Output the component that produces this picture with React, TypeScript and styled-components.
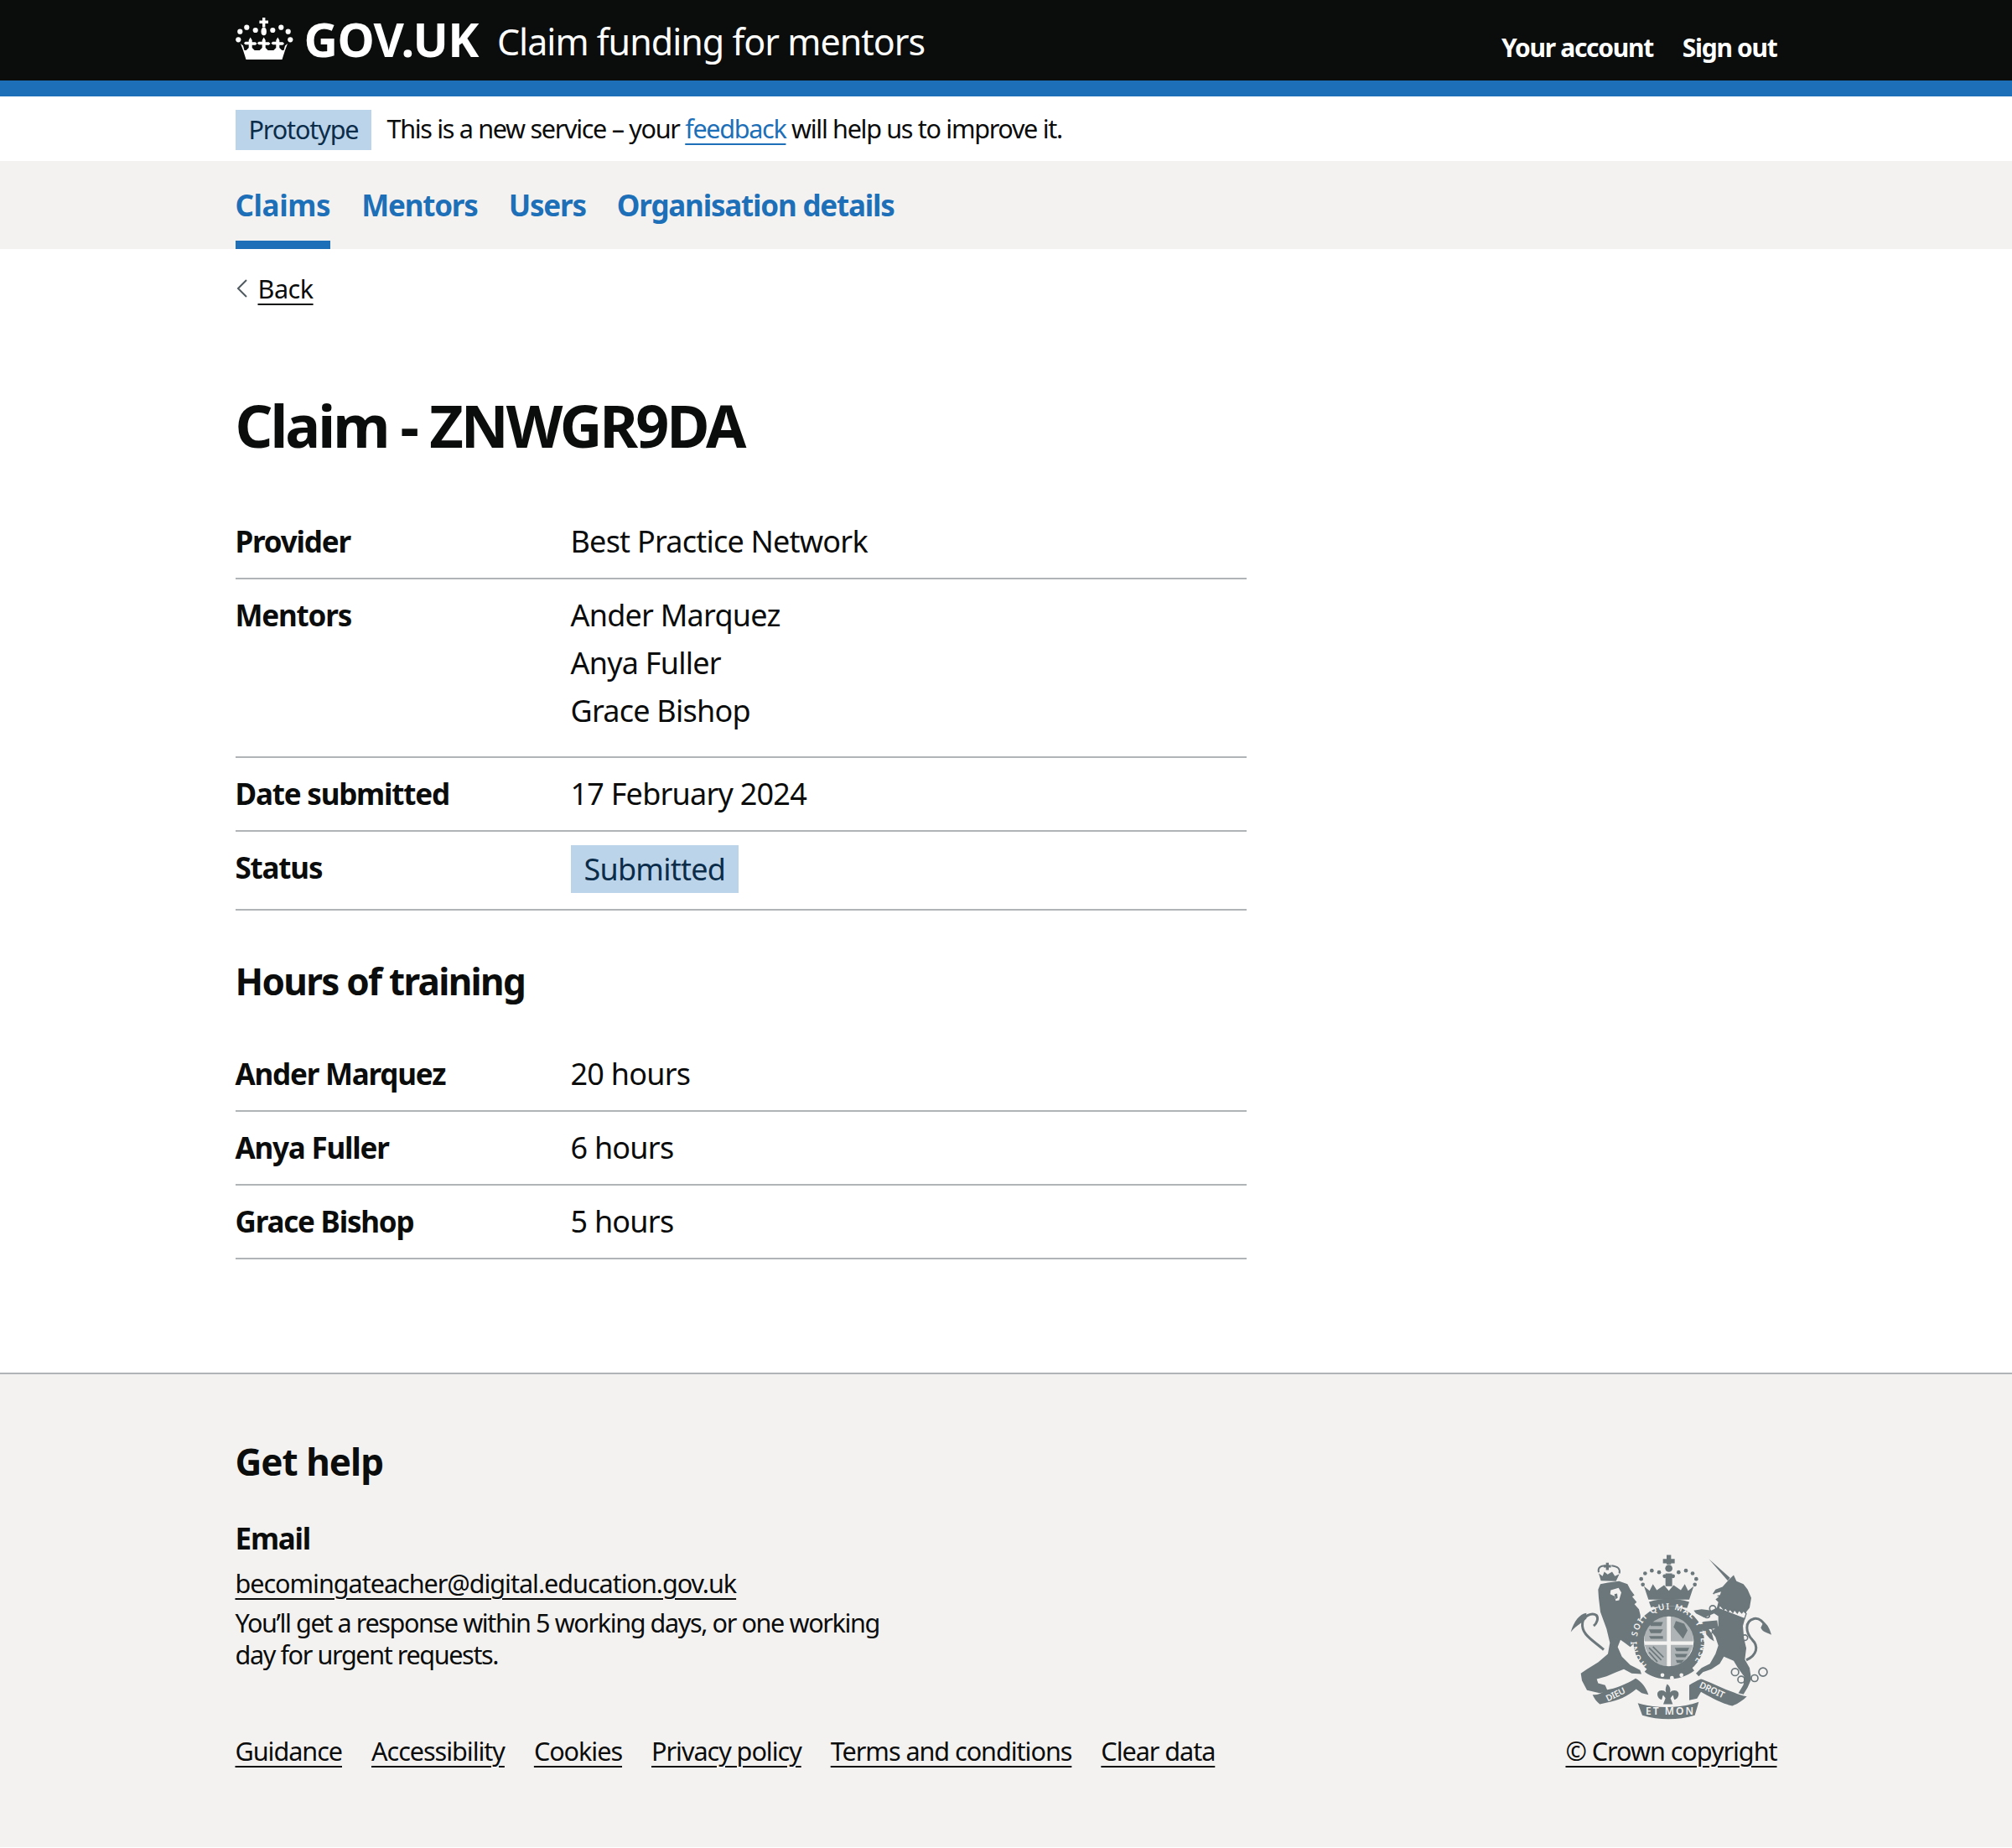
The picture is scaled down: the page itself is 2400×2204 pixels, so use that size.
import React from "react";
import styled, { createGlobalStyle } from "styled-components";

const GlobalStyle = createGlobalStyle`
  html, body { margin: 0; padding: 0; background: #fff; }
  body {
    font-family: "Noto Sans", "Liberation Sans", sans-serif;
    color: #0b0c0c;
    font-size: 36px;
    line-height: 48px;
    letter-spacing: -0.78px;
  }
  a { color: inherit; }
`;

const Container = styled.div`
  width: 1839px;
  margin: 0 auto;
`;

const Header = styled.header`
  background: #0b0c0c;
  height: 96px;
  border-bottom: 19px solid #1d70b8;
`;

const HeaderInner = styled(Container)`
  display: flex;
  justify-content: space-between;
  height: 96px;
`;

const Brand = styled.div`
  display: flex;
  align-items: center;
  height: 96px;
  color: #fff;
`;

const CrownLogo = styled.svg`
  width: 69px;
  height: 50px;
  margin-right: 13px;
  margin-top: -4px;
`;

const LogoText = styled.span`
  font-weight: 700;
  font-size: 56px;
  letter-spacing: -0.6px;
  margin-top: -4px;
`;

const ServiceName = styled.span`
  font-size: 43px;
  margin-left: 22px;
  letter-spacing: -1px;
  margin-top: 4px;
`;

const AccountLinks = styled.nav`
  display: flex;
  gap: 35px;
  padding-top: 33px;
`;

const AccountLink = styled.a`
  color: #fff;
  font-weight: 700;
  font-size: 30px;
  line-height: 48px;
  letter-spacing: -1.3px;
  text-decoration: none;
`;

const PhaseBanner = styled.div`
  height: 77px;
  background: #fff;
`;

const PhaseInner = styled(Container)`
  display: flex;
  align-items: center;
  gap: 18px;
  padding-top: 15px;
  font-size: 30.6px;
  line-height: 46px;
  letter-spacing: -1.33px;
`;

const PhaseTag = styled.strong`
  background: #bbd4ea;
  color: #0c2d4a;
  font-weight: 400;
  padding: 0 16px;
  height: 48px;
  letter-spacing: -1.15px;
  display: block;
`;

const PhaseMessage = styled.span`
  margin-bottom: 3px;
`;

const FeedbackLink = styled.a`
  color: #1d70b8;
  text-decoration-thickness: 2px;
  text-underline-offset: 6px;
`;

const NavBar = styled.nav`
  background: #f3f2f1;
  height: 105px;
`;

const NavList = styled(Container)`
  display: flex;
  gap: 37px;
`;

const NavItem = styled.a<{ $active?: boolean }>`
  display: block;
  height: 105px;
  box-sizing: border-box;
  padding-top: 29px;
  color: #1d70b8;
  font-weight: 700;
  font-size: 35px;
  letter-spacing: ${(props) => (props.$active ? "-0.4px" : "-1.2px")};
  text-decoration: none;
  border-bottom: 10px solid ${(props) => (props.$active ? "#1d70b8" : "transparent")};
`;

const BackLink = styled.a`
  display: inline-flex;
  align-items: center;
  gap: 12px;
  margin-top: 28px;
  font-size: 30.6px;
  line-height: 38px;
  letter-spacing: -0.5px;
  text-decoration: none;
`;

const BackChevron = styled.svg`
  width: 14px;
  height: 22px;
  margin-left: 1px;
`;

const BackText = styled.span`
  text-decoration: underline;
  text-decoration-thickness: 2px;
  text-underline-offset: 6px;
`;

const Main = styled.main`
  padding-top: 95px;
  padding-bottom: 135px;
`;

const PageTitle = styled.h1`
  margin: 0 0 50px;
  font-size: 70px;
  line-height: 92px;
  font-weight: 700;
  letter-spacing: -3px;
`;

const SectionTitle = styled.h2`
  margin: 56px 0 39px;
  font-size: 44px;
  line-height: 57px;
  font-weight: 700;
  letter-spacing: -1.7px;
`;

const SummaryList = styled.dl`
  width: 1206px;
  margin: 0;
`;

const SummaryRow = styled.div`
  display: grid;
  grid-template-columns: 400px 1fr;
  padding: 19px 0 19px;
  border-bottom: 2px solid #b1b4b6;
`;

const Key = styled.dt`
  font-weight: 700;
  font-size: 35px;
  letter-spacing: -1.2px;
`;

const Value = styled.dd`
  margin: 0;
`;

const MentorLine = styled.p`
  margin: 0 0 9px;
  &:last-child { margin-bottom: 11px; }
`;

const StatusTag = styled.strong`
  display: inline-block;
  background: #bbd4ea;
  color: #0c2d4a;
  font-weight: 400;
  padding: 0 16px;
  line-height: 57px;
  margin: -3px 0 0;
`;

const Footer = styled.footer`
  background: #f3f2f1;
  border-top: 2px solid #b1b4b6;
  height: 566px;
  box-sizing: border-box;
  padding-top: 76px;
  font-size: 30.6px;
  line-height: 38px;
  letter-spacing: -1.05px;
`;

const FooterInner = styled(Container)`
  display: flex;
  justify-content: space-between;
  align-items: flex-end;
`;

const FooterTitle = styled.h2`
  margin: 0 0 39px;
  font-size: 44px;
  line-height: 57px;
  font-weight: 700;
  letter-spacing: -1px;
`;

const FooterSubTitle = styled.h3`
  margin: 0 0 10px;
  font-size: 35px;
  line-height: 48px;
  font-weight: 700;
  letter-spacing: -1.2px;
`;

const FooterLink = styled.a`
  color: #0b0c0c;
  text-decoration-thickness: 2px;
  text-underline-offset: 6px;
`;

const HelpText = styled.p`
  margin: 9px 0 77px;
  width: 800px;
  letter-spacing: -1.4px;
`;

const FooterLinks = styled.div`
  display: flex;
  gap: 35px;
`;

const LicenceColumn = styled.div`
  display: flex;
  flex-direction: column;
  align-items: center;
`;

const Crest = styled.svg`
  width: 240px;
  height: 197px;
  margin-bottom: 18px;
`;

const crownDots = [
  [13.3, 11.7],
  [23.7, 15],
  [44.3, 15],
  [54.3, 11.7],
  [5.3, 16.7],
  [62.7, 16.7],
  [3.3, 26.3],
  [65.3, 26.3],
];

const crownFleurs = [17.7, 33.7, 50.3];

const CrownIcon = () => (
  <CrownLogo viewBox="0 0 69 50" aria-hidden="true">
    <g fill="#fff">
      <path d="M32 0h3.4v3.400h3.600v3.600h-3.600v4.600h-3.400V7h-3.600V3.400H32z" />
      <ellipse cx="33.700" cy="16.500" rx="3.200" ry="4.800" />
      {crownDots.map(([cx, cy]) => (
        <circle key={`${cx}-${cy}`} cx={cx} cy={cy} r="3.100" />
      ))}
      {crownFleurs.map((x) => (
        <path
          key={x}
          d={`M${x} 23.500l2 3.500v2.300h4l1.800 1.700-1.800 1.700h-4V36l3 3h-10l3-3v-3.800h-4l-1.800-1.700 1.800-1.700h4V27z`}
        />
      ))}
      <path d="M6 31l3 2.500 1.500 5.500h47l1.500-5.500 3-2.500-3 8-3.500 11H12.500L9 39z" />
    </g>
  </CrownLogo>
);

const CREST = "#6b777b";
const CREST_BG = "#f3f2f1";

const crestCrownDots = [
  [330, 152],
  [324, 132],
  [338, 112],
  [362, 102],
  [388, 108],
  [408, 122],
  [438, 122],
  [458, 108],
  [484, 102],
  [508, 112],
  [521, 132],
  [516, 152],
];

const chainLinks = [
  [660, 465, 13],
  [682, 492, 12],
  [730, 487, 12],
  [760, 465, 15],
  [695, 342, 10],
  [688, 380, 8],
  [570, 318, 10],
  [580, 238, 11],
  [560, 262, 9],
];

const shieldQuarters = [
  "M342 276q34-14 74-13v92h-80q-2-40 6-79z",
  "M430 263q40-1 74 13 8 39 6 79h-80z",
  "M336 368h80v78q-62-8-80-78z",
  "M430 368h80q-18 70-80 78z",
];

const shieldMarks = [
  "M352 286h50l-6 14h-38zM352 312h50l-8 14h-36zM352 336h50v10h-44z",
  "M448 282l30 10 12 24-16 30-20-24-14-18z",
  "M444 378h52l-6 12h-40zM444 400h46l-8 12h-32zM448 422h30l-10 10h-16z",
];

const CrestIcon = () => (
  <Crest viewBox="70 45 720 590" aria-hidden="true">
    <g fill={CREST}>
      {/* royal crown */}
      <path d="M415 46h16v14h13v16h-13v4h-16v-4h-13V60h13z" />
      <circle cx="423" cy="94" r="13" />
      <path d="M411 112h24v46h-24z" />
      <path d="M334 158l20 16 12-24 14 22 26-18 17 20 17-20 26 18 14-22 12 24 20-16-16 48H350z" />
      <path d="M352 214q70-22 144 0l-8 22q-64-14-128 0z" />
      {crestCrownDots.map(([cx, cy]) => (
        <circle key={`${cx}-${cy}`} cx={cx} cy={cy} r="7" />
      ))}

      {/* lion */}
      <path d="M178 150l27-5 40-5 30 10 10 20 15 20-8 5 16 20-8 7 16 18 6 25-4 20 4 45 8 42-30-12-15 15-20-15-15-10-10 25 15 35 30 30 35 18 5 14-35-2-28-15-27 10-35 15-35 10 5 15 25 7 10 23-30 5-45-10-18-35-4-25 22-15 40-25 35-30 7-40-12-50-22-60-6-50-2-30z" />
      <path d="M190 385C150 350 108 330 114 288c3-24 34-38 50-26 8 10 2 28-10 38" fill="none" stroke={CREST} strokeWidth="9" />
      <path d="M128 254c-26 4-44 30-56 68 22-26 40-32 56-48z" />
      <path d="M172 112l8 26 54 2 12-26-16 8-10-16-16 10-12-10-6 16z" />
      <path d="M198 74h10v8h8v9h-8v9h-10v-9h-8v-9h8z" />
      <path d="M172 108q-6-24 26-24M246 112q6-24-28-28" fill="none" stroke={CREST} strokeWidth="6" />
      <path d="M215 172l28-8 10 16-8 28-12 2-4-16-16-8z" fill={CREST_BG} />
      <path d="M228 186l10-2 2 16-8 4z" />

      {/* unicorn */}
      <path d="M566 60l76 68-8 10z" />
      <path d="M640 132l15-14 10 22 25 10 15 20 13 30-6 35-12 15-5 25-7 25 4 45 8 35-5 40 17 30 6 40-13 30-15 25-18-5 18-30 2-30-22-30-15-25-35-15-15 25-30 20-30 10-15 15-10-10 20-20 30-15 20-35 10-30-10-30-15-20 25-20v-35l-15-10-35 15-30-15-8-10 28-5 35 5 20-10 5-20-10-10 12-10-22-10 10-15 25-10z" />
      <path d="M596 280l-51 5-15 15 40 45 15 10-7-25-13-20 35 0z" />
      <path d="M604 224l-2 14 92 36 6-18-10-10-6 8-10-10-6 10-10-12-6 10-10-12-6 8-10-12-6 6z" fill={CREST_BG} stroke={CREST} strokeWidth="4" />
      <path d="M700 422C740 404 744 372 722 350c-24-26-30-66 6-76 26-4 36 20 46 32" fill="none" stroke={CREST} strokeWidth="9" />
      <path d="M762 286c14 8 22 24 28 46-16-10-30-8-38-26z" />
      <path d="M585 185l25-8-4 12-20 4z" fill={CREST_BG} />

      {/* motto scrolls */}
      <path d="M150 546c14 2 30-2 46-16 38-6 76-22 108-42 22 12 36 30 46 58l-24-6-20-14c-30 26-66 42-104 48l-26 6c-10-8-20-20-26-34z" />
      <path d="M312 576c64 20 152 20 218-4l-14 48c-60 18-128 18-188 0z" />
      <path d="M496 512c12-8 26-16 42-22 38 12 76 34 118 48 14 6 30 12 46 14-14 14-32 26-52 34-36-8-76-30-112-50l-14 24-28 6z" />
      <path d="M417 508c10 8 14 18 10 30 8-10 24-10 30 0 4 12-4 24-14 26-4-6-2-12-6-16l-8 10 8 22h-34l8-22-8-10c-4 4-2 10-6 16-10-2-18-14-14-26 6-10 22-10 30 0-4-12 0-22 4-30z" />
    </g>

    {/* garter and shield */}
    <circle cx="423" cy="355" r="108" fill="none" stroke={CREST} strokeWidth="38" />
    <path d="M352 446c48 30 104 26 148-6l14 20c-46 36-126 44-178 4z" fill={CREST} />
    <circle cx="400" cy="476" r="7" fill={CREST_BG} />
    <circle cx="434" cy="486" r="7" fill={CREST_BG} />
    <circle cx="468" cy="476" r="7" fill={CREST_BG} />
    <g fill={CREST} opacity="0.5">
      {shieldQuarters.map((d) => (
        <path key={d} d={d} />
      ))}
    </g>
    <g fill={CREST}>
      {shieldMarks.map((d) => (
        <path key={d} d={d} />
      ))}
    </g>
    <path d="M352 378l44 44M366 374l38 38M352 394l30 34" stroke={CREST} strokeWidth="5" />
    {chainLinks.map(([cx, cy, r]) => (
      <circle key={`${cx}-${cy}`} cx={cx} cy={cy} r={r} fill="none" stroke={CREST} strokeWidth="5" />
    ))}

    <defs>
      <path id="garter-ring" d="M345 440A115 115 0 1 1 501 440" />
    </defs>
    <g fill={CREST_BG} fontFamily="Noto Sans, sans-serif" fontWeight="600">
      <text fontSize="30" letterSpacing="0">
        <textPath href="#garter-ring" textLength="530">HONI SOIT QUI MAL Y PENSE</textPath>
      </text>
      <text fontSize="36" x="340" y="618" textLength="170">ET MON</text>
      <text fontSize="32" transform="translate(204 571) rotate(-26)">DIEU</text>
      <text fontSize="32" transform="translate(530 519) rotate(25)">DROIT</text>
    </g>
  </Crest>
);

const mentors = ["Ander Marquez", "Anya Fuller", "Grace Bishop"];

const hours = [
  { name: "Ander Marquez", value: "20 hours" },
  { name: "Anya Fuller", value: "6 hours" },
  { name: "Grace Bishop", value: "5 hours" },
];

const footerLinks = [
  "Guidance",
  "Accessibility",
  "Cookies",
  "Privacy policy",
  "Terms and conditions",
  "Clear data",
];

export default function App() {
  return (
    <>
      <GlobalStyle />
      <Header>
        <HeaderInner>
          <Brand>
            <CrownIcon />
            <LogoText>GOV.UK</LogoText>
            <ServiceName>Claim funding for mentors</ServiceName>
          </Brand>
          <AccountLinks>
            <AccountLink href="#">Your account</AccountLink>
            <AccountLink href="#">Sign out</AccountLink>
          </AccountLinks>
        </HeaderInner>
      </Header>
      <PhaseBanner>
        <PhaseInner>
          <PhaseTag>Prototype</PhaseTag>
          <PhaseMessage>
            This is a new service – your <FeedbackLink href="#">feedback</FeedbackLink> will help us
            to improve it.
          </PhaseMessage>
        </PhaseInner>
      </PhaseBanner>
      <NavBar>
        <NavList>
          <NavItem href="#" $active>Claims</NavItem>
          <NavItem href="#">Mentors</NavItem>
          <NavItem href="#">Users</NavItem>
          <NavItem href="#">Organisation details</NavItem>
        </NavList>
      </NavBar>
      <Container>
        <BackLink href="#">
          <BackChevron viewBox="0 0 14 22" aria-hidden="true">
            <path d="M12 1 2 11l10 10" fill="none" stroke="#505a5f" strokeWidth="2" />
          </BackChevron>
          <BackText>Back</BackText>
        </BackLink>
        <Main>
          <PageTitle>Claim - ZNWGR9DA</PageTitle>
          <SummaryList>
            <SummaryRow>
              <Key>Provider</Key>
              <Value>Best Practice Network</Value>
            </SummaryRow>
            <SummaryRow>
              <Key>Mentors</Key>
              <Value>
                {mentors.map((name) => (
                  <MentorLine key={name}>{name}</MentorLine>
                ))}
              </Value>
            </SummaryRow>
            <SummaryRow>
              <Key>Date submitted</Key>
              <Value>17 February 2024</Value>
            </SummaryRow>
            <SummaryRow>
              <Key>Status</Key>
              <Value>
                <StatusTag>Submitted</StatusTag>
              </Value>
            </SummaryRow>
          </SummaryList>
          <SectionTitle>Hours of training</SectionTitle>
          <SummaryList>
            {hours.map((row) => (
              <SummaryRow key={row.name}>
                <Key>{row.name}</Key>
                <Value>{row.value}</Value>
              </SummaryRow>
            ))}
          </SummaryList>
        </Main>
      </Container>
      <Footer>
        <FooterInner>
          <div>
            <FooterTitle>Get help</FooterTitle>
            <FooterSubTitle>Email</FooterSubTitle>
            <FooterLink href="#">becomingateacher@digital.education.gov.uk</FooterLink>
            <HelpText>
              You’ll get a response within 5 working days, or one working day for urgent requests.
            </HelpText>
            <FooterLinks>
              {footerLinks.map((label) => (
                <FooterLink href="#" key={label}>{label}</FooterLink>
              ))}
            </FooterLinks>
          </div>
          <LicenceColumn>
            <CrestIcon />
            <FooterLink href="#">© Crown copyright</FooterLink>
          </LicenceColumn>
        </FooterInner>
      </Footer>
    </>
  );
}
